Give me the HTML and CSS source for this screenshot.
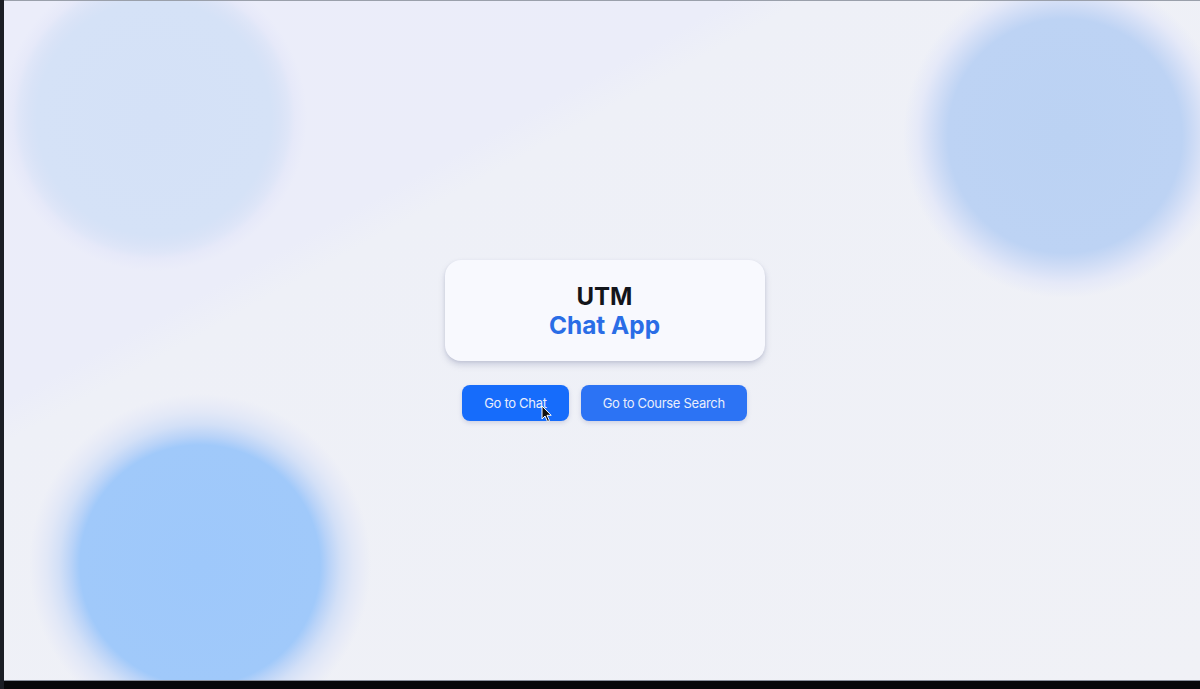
FILE: index.html
```html
<!DOCTYPE html>
<html lang="en">
<head>
<meta charset="utf-8">
<title>UTM Chat App</title>
<link rel="stylesheet" href="styles.css">
</head>
<body>
<div class="screen">
  <div class="viewport">
    <div class="blob blob-tl"></div>
    <div class="blob blob-tr"></div>
    <div class="blob blob-bl"></div>
    <main class="center">
      <div class="card">
        <h1 class="title"><span class="title-top">UTM</span><span class="title-bottom">Chat App</span></h1>
      </div>
      <div class="actions">
        <button class="btn btn-hover">Go to Chat</button>
        <button class="btn">Go to Course Search</button>
      </div>
    </main>
    <svg class="cursor" width="12" height="18" viewBox="0 0 12 18"><path d="M1 1 L1 14 L4 11 L6.5 16.5 L8.5 15.6 L6 10.3 L10.2 10.3 Z" fill="#111" stroke="#fff" stroke-width="1"/></svg>
  </div>
  <div class="taskbar"></div>
</div>
</body>
</html>
```
FILE: styles.css
```css
* { box-sizing: border-box; }
html, body { margin: 0; padding: 0; width: 1200px; height: 689px; overflow: hidden; background: #0b0c0f; }
body { font-family: Inter, "Noto Sans", "Liberation Sans", sans-serif; }

.screen {
  width: 1200px;
  height: 689px;
  display: flex;
  flex-direction: column;
  border-left: 4px solid #1b1e25;
}
.viewport {
  position: relative;
  flex: 1;
  overflow: hidden;
  border-top: 1px solid #9aa0ab;
  border-bottom: 1px solid #8a909c;
  background:
    linear-gradient(151deg, #ebedfa 0%, #ebedf9 30%, #eef0f7 33%, #f0f1f6 100%);
  display: flex;
  align-items: center;
  justify-content: center;
}
.taskbar { height: 8px; background: #07080a; }

.blob { position: absolute; border-radius: 50%; }
.blob-tl {
  left: -150px; top: -183px; width: 600px; height: 600px;
  background: radial-gradient(circle closest-side, #d4e1f7 0%, #d5e2f7 39%, #d9e3f7 42%, #dfe6f8 45%, #e6e9f9 47%, rgba(235,237,249,0) 51%);
}
.blob-tr {
  left: 761px; top: -165px; width: 600px; height: 600px;
  background: radial-gradient(circle closest-side, #bbd2f3 0%, #bdd3f4 39%, #c9d9f5 42%, #d9e2f7 46%, #e5e9f8 49%, rgba(239,240,246,0) 54%);
}
.blob-bl {
  left: -104px; top: 264px; width: 600px; height: 600px;
  background: radial-gradient(circle closest-side, #9ec8fb 0%, #a0c9fa 40%, #b9d3f8 43%, #d3e0f7 47%, #e2e8f7 51%, #e9ecf7 54%, rgba(239,240,246,0) 57%);
}

.center {
  position: relative;
  display: flex;
  flex-direction: column;
  align-items: center;
  gap: 24px;
  margin-left: 5px;
  margin-top: 0;
}
.card {
  width: 320px;
  height: 101px;
  background: #f8f9fe;
  border-radius: 16px;
  box-shadow: 0 4px 6px rgba(120,125,160,0.28), 0 1px 3px rgba(120,125,160,0.18);
  display: flex;
  align-items: center;
  justify-content: center;
}
.title {
  margin: 0;
  display: flex;
  flex-direction: column;
  align-items: center;
  font-weight: 700;
  line-height: 29px;
}
.title-top { font-size: 24px; color: #13151b; }
.title-bottom { font-size: 24.4px; color: #2a6de6; }

.actions { display: flex; gap: 12px; }
.btn {
  height: 36px;
  padding: 0 22px;
  border: none;
  border-radius: 8px;
  background: #2c73f4;
  color: #e9eefb;
  font-family: Inter, "Noto Sans", "Liberation Sans", sans-serif;
  font-size: 13px;
  letter-spacing: -0.3px;
  box-shadow: 0 2px 4px rgba(110,120,170,0.25);
}
.btn-hover { background: #166cfb; }

.cursor { position: absolute; left: 537px; top: 404px; }
```
